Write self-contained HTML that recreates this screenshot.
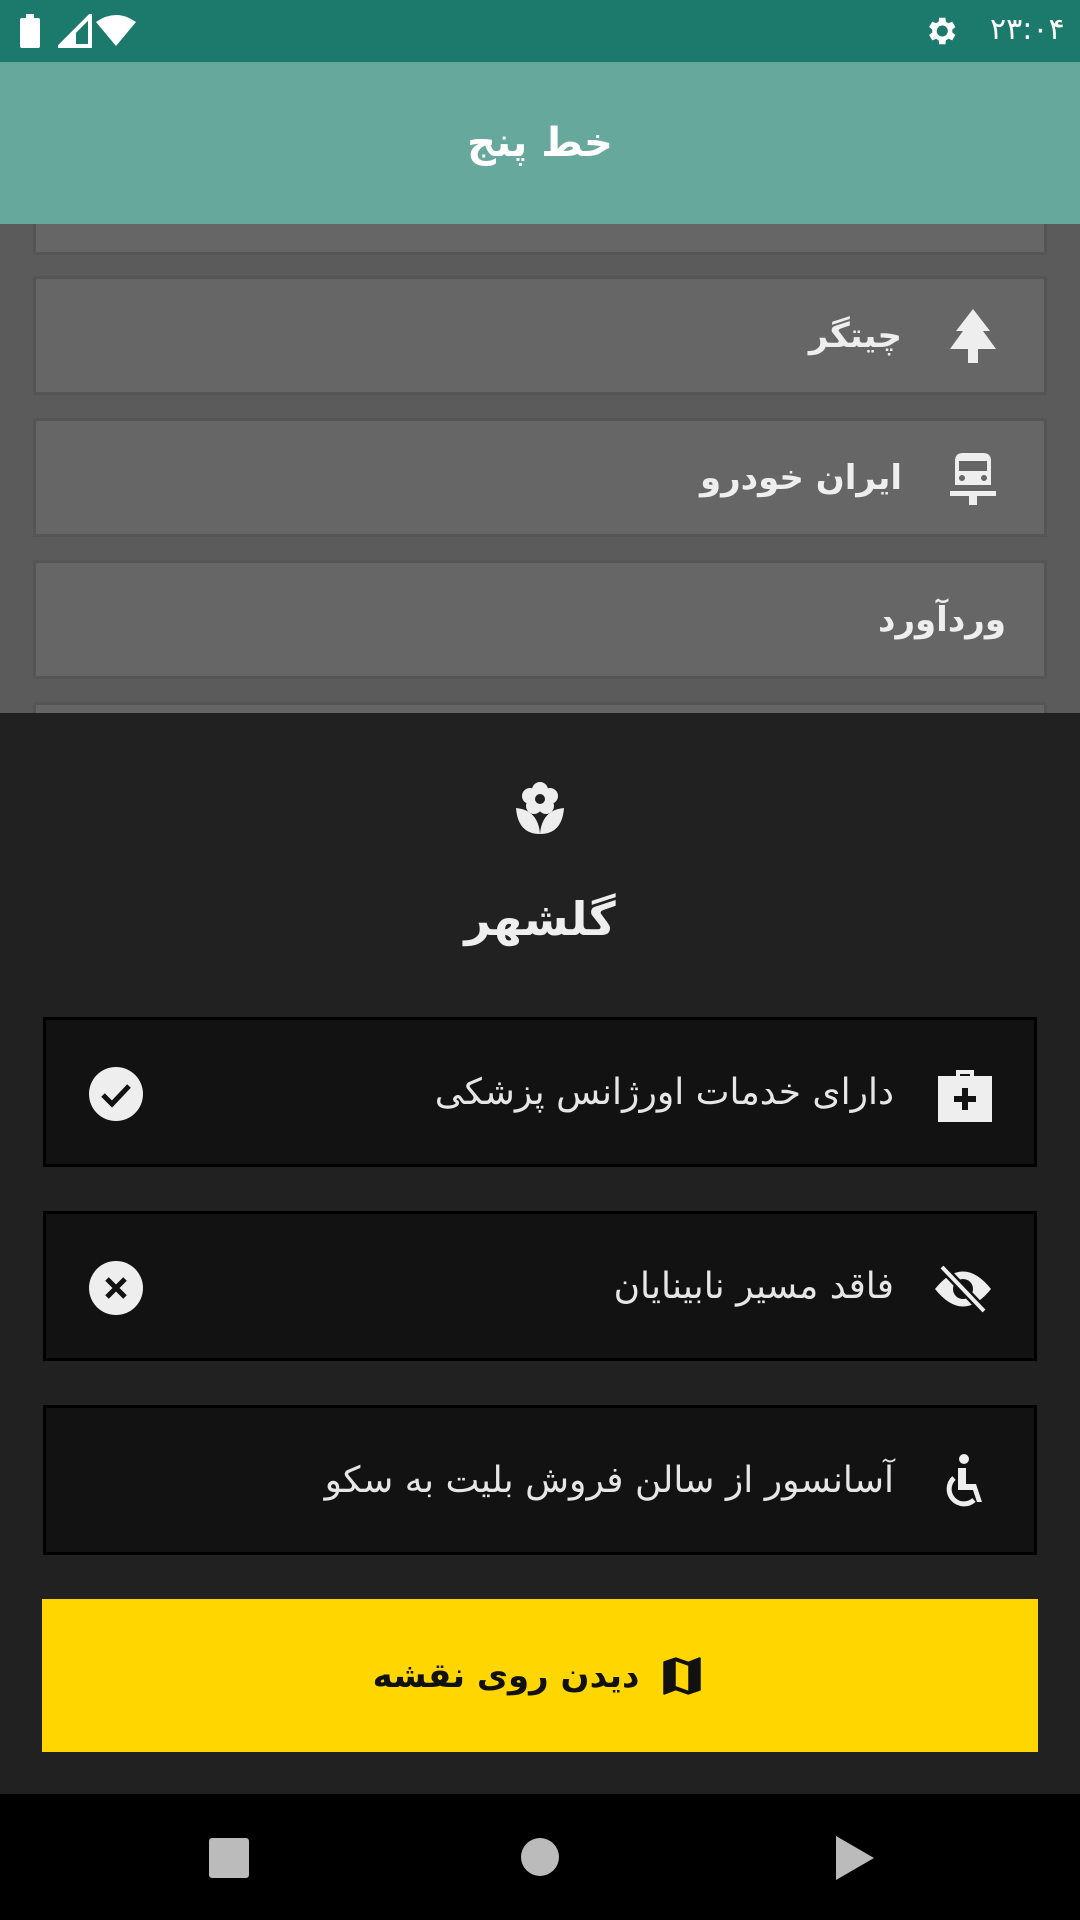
<!DOCTYPE html>
<html><head><meta charset="utf-8"><style>
*{margin:0;padding:0;box-sizing:border-box}
body{width:1080px;height:1920px;position:relative;overflow:hidden;background:#5b5b5b;font-family:"DejaVu Sans","Liberation Sans",sans-serif;direction:rtl}
.abs{position:absolute}
.status{top:0;left:0;width:1080px;height:62px;background:#1b7a6b;z-index:5}
.header{top:62px;left:0;width:1080px;height:162px;background:#67a89c;color:#fff;font-weight:bold;font-size:40px;text-align:center;line-height:162px;z-index:5}
.item{left:33px;width:1014px;background:#666;border:3px solid #555}
.item .t{position:absolute;right:0;top:0;bottom:0;display:flex;align-items:center;color:#eee;font-weight:bold;font-size:34px}
.sheet{top:713px;left:0;width:1080px;height:1081px;background:#212121}
.box{left:43px;width:994px;height:150px;background:#121212;border:3px solid #000}
.box .t{position:absolute;right:140px;top:0;bottom:0;display:flex;align-items:center;color:#e6e6e6;font-size:36px}
.nav{top:1794px;left:0;width:1080px;height:126px;background:#000}
</style></head><body>
<div class="abs status">
 <svg class="abs" style="left:20px;top:14px" width="20" height="34"><rect x="0" y="4" width="20" height="30" rx="2" fill="#fff"/><rect x="6" y="0" width="8" height="5" fill="#fff"/></svg>
 <svg class="abs" style="left:58px;top:14px" width="34" height="34"><path d="M2 32L32 2V32Z" fill="none" stroke="#fff" stroke-width="4"/><path d="M2 32L18 16V32Z" fill="#fff"/></svg>
 <svg class="abs" style="left:96px;top:14px" width="40" height="32"><path d="M0 8Q20-6 40 8L20 32Z" fill="#fff"/></svg>
 <svg class="abs" style="left:922px;top:12px" width="38" height="38" viewBox="0 0 24 24"><path fill="#fff" d="M19.1 12.9a7 7 0 000-1.8l2-1.6-2-3.4-2.4 1a7 7 0 00-1.6-.9L14.8 3.6h-4l-.3 2.6a7 7 0 00-1.6.9l-2.4-1-2 3.4 2 1.6a7 7 0 000 1.8l-2 1.6 2 3.4 2.4-1c.5.4 1 .7 1.6.9l.3 2.6h4l.3-2.6c.6-.2 1.1-.5 1.6-.9l2.4 1 2-3.4zM12.8 15.5a3.5 3.5 0 110-7 3.5 3.5 0 010 7z"/></svg>
 <div class="abs" style="left:990px;top:12px;color:#fff;font-size:30px">۲۳:۰۴</div>
</div>
<div class="abs header">خط پنج</div>
<div class="abs item" style="top:200px;height:55px"></div>
<div class="abs item" style="top:276px;height:119px"><div class="t" style="right:142px">چیتگر</div>
 <svg class="abs" style="right:46px;top:30px" width="50" height="56" viewBox="0 0 50 56"><path d="M25 0L42 22H35L48 40H2L15 22H8Z" fill="#eee"/><rect x="20" y="40" width="10" height="14" fill="#eee"/></svg></div>
<div class="abs item" style="top:418px;height:119px"><div class="t" style="right:142px">ایران خودرو</div>
 <svg class="abs" style="right:48px;top:32px" width="46" height="52" viewBox="0 0 46 52"><path d="M5 8Q5 0 13 0H33Q41 0 41 8V32H5Z" fill="#eee"/><rect x="9" y="8" width="28" height="10" fill="#666"/><circle cx="12" cy="25" r="3" fill="#666"/><circle cx="34" cy="25" r="3" fill="#666"/><rect x="0" y="38" width="46" height="5" fill="#eee"/><rect x="19" y="43" width="8" height="9" fill="#eee"/></svg></div>
<div class="abs item" style="top:560px;height:119px"><div class="t" style="right:38px">وردآورد</div></div>
<div class="abs item" style="top:702px;height:40px"></div>
<div class="abs sheet"></div>
<svg class="abs" style="left:514px;top:778px" width="52" height="56" viewBox="0 0 52 56"><g fill="#eee"><circle cx="26" cy="12" r="8"/><circle cx="16" cy="18" r="8"/><circle cx="36" cy="18" r="8"/><circle cx="20" cy="28" r="8"/><circle cx="32" cy="28" r="8"/><path d="M2 30Q24 32 26 56Q4 56 2 30Z"/><path d="M50 30Q28 32 26 56Q48 56 50 30Z"/></g><circle cx="26" cy="21" r="5" fill="#212121"/></svg>
<div class="abs" style="top:892px;left:0;width:1080px;text-align:center;color:#eee;font-weight:bold;font-size:46px">گلشهر</div>
<div class="abs box" style="top:1017px"><div class="t">دارای خدمات اورژانس پزشکی</div>
 <svg class="abs" style="right:42px;top:48px" width="54" height="54" viewBox="0 0 54 54"><path d="M18 8V2H36V8H54V54H0V8ZM22 6V8H32V6Z" fill="#eee" fill-rule="evenodd"/><path d="M24 20H30V28H38V34H30V42H24V34H16V28H24Z" fill="#121212"/></svg>
 <svg class="abs" style="left:43px;top:47px" width="54" height="54" viewBox="0 0 54 54"><circle cx="27" cy="27" r="27" fill="#eee"/><path d="M14 28L23 37L40 19" fill="none" stroke="#121212" stroke-width="5"/></svg></div>
<div class="abs box" style="top:1211px"><div class="t">فاقد مسیر نابینایان</div>
 <svg class="abs" style="right:42px;top:50px" width="58" height="50" viewBox="0 0 58 50"><path d="M1 25Q29-10 57 25Q29 60 1 25Z" fill="#eee"/><circle cx="29" cy="25" r="10" fill="#121212"/><path d="M8 3L50 47" stroke="#121212" stroke-width="9"/><path d="M8 3L50 47" stroke="#eee" stroke-width="4"/></svg>
 <svg class="abs" style="left:43px;top:47px" width="54" height="54" viewBox="0 0 54 54"><circle cx="27" cy="27" r="27" fill="#eee"/><path d="M18 18L36 36M36 18L18 36" stroke="#121212" stroke-width="5"/></svg></div>
<div class="abs box" style="top:1405px"><div class="t">آسانسور از سالن فروش بلیت به سکو</div>
 <svg class="abs" style="right:48px;top:46px" width="42" height="56" viewBox="0 0 42 56"><circle cx="20" cy="5" r="5" fill="#eee"/><path d="M14 14H22V30H32L38 48H33L29 36H14Z" fill="#eee"/><path d="M10 24A14 14 0 1 0 30 46" fill="none" stroke="#eee" stroke-width="5"/></svg></div>
<div class="abs" style="top:1599px;left:42px;width:996px;height:153px;background:#ffd600;display:flex;align-items:center;justify-content:center;direction:ltr;gap:18px">
 <div style="font-weight:bold;font-size:34px;color:#111;direction:rtl">دیدن روی نقشه</div>
 <svg width="50" height="50" viewBox="0 0 24 24"><path fill="#111" d="M20.5 3l-.16.03L15 5.1 9 3 3.36 4.9c-.21.07-.36.25-.36.48V20.5c0 .28.22.5.5.5l.16-.03L9 18.9l6 2.1 5.64-1.9c.21-.07.36-.25.36-.48V3.5c0-.28-.22-.5-.5-.5zM15 19l-6-2.11V5l6 2.11V19z"/></svg>
</div>
<div class="abs nav">
 <div class="abs" style="left:209px;top:44px;width:40px;height:40px;background:#bbb;border-radius:3px"></div>
 <div class="abs" style="left:521px;top:44px;width:38px;height:38px;background:#bbb;border-radius:50%"></div>
 <svg class="abs" style="left:836px;top:42px" width="38" height="44"><path d="M0 0L38 22L0 44Z" fill="#bbb"/></svg>
</div>
</body></html>
